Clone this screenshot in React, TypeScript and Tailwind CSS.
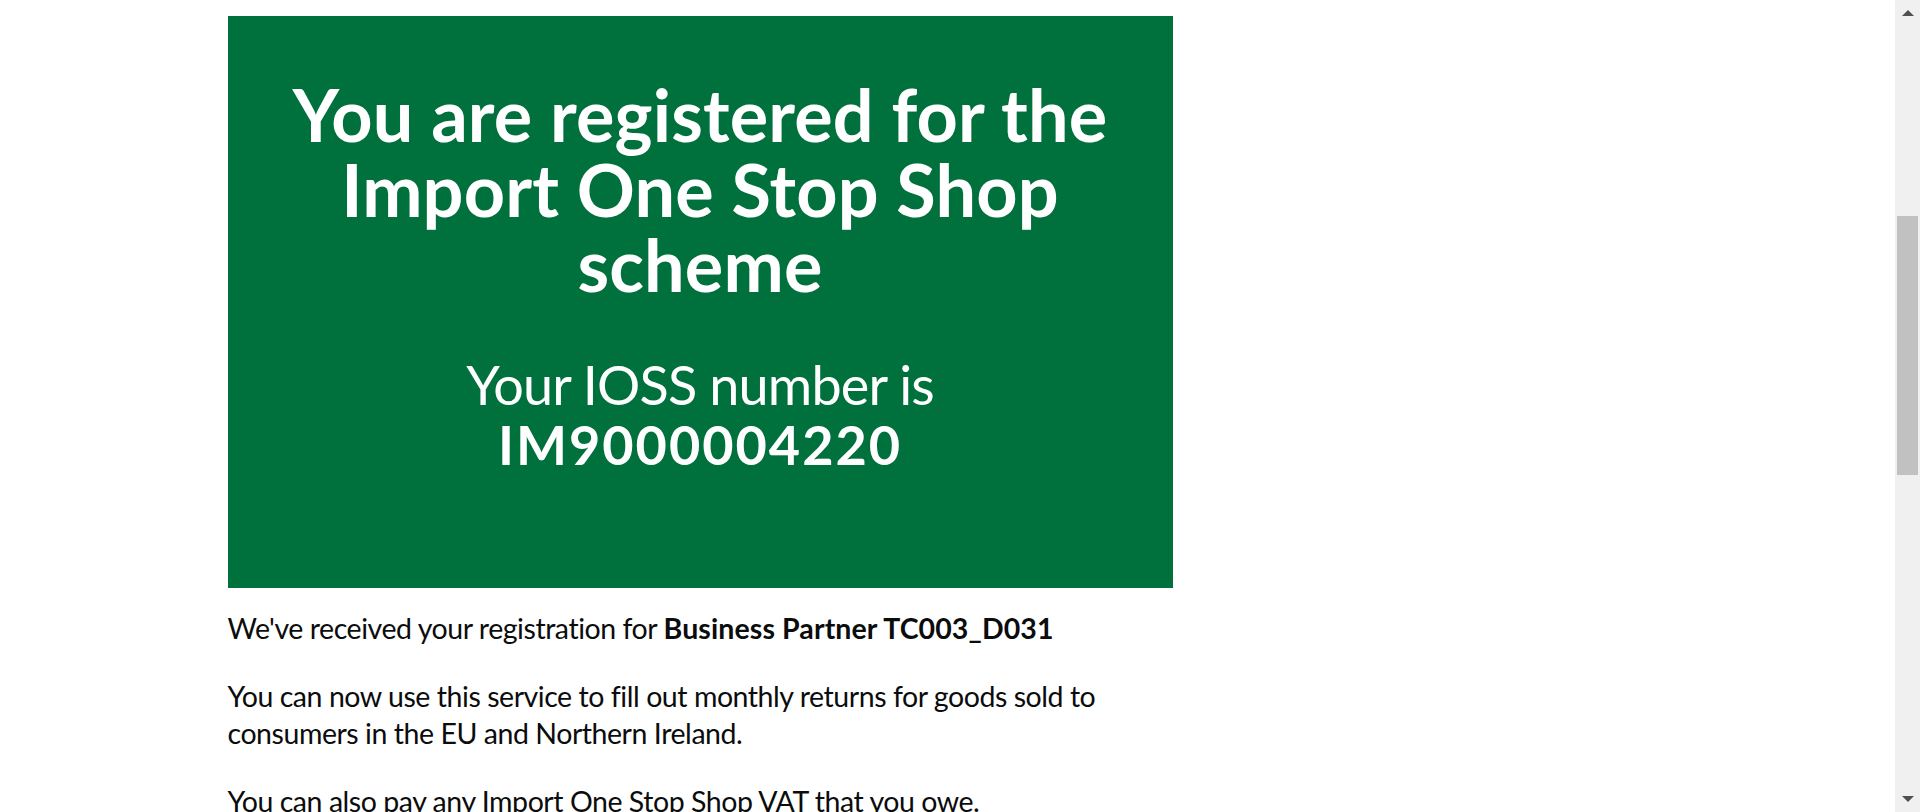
import React from "react";

const Scrollbar = () => {
  return (
    <aside className="w-[25px] shrink-0 bg-[#f0f0f0] flex flex-col items-center pt-[10px] pb-[10px]">
      <div className="w-0 h-0 border-x-[6px] border-x-transparent border-b-[6px] border-b-[#505050]" />
      <div className="mt-[200px] w-[21px] h-[259px] bg-[#c1c1c1]" />
      <div className="flex-1" />
      <div className="w-0 h-0 border-x-[6px] border-x-transparent border-t-[6px] border-t-[#505050]" />
    </aside>
  );
};

const App = () => {
  return (
    <div className="flex h-[812px] overflow-hidden bg-white font-['Lato',sans-serif] text-[#0b0c0c]">
      <main className="flex-1 min-w-0">
        <div className="mx-auto w-[1440px] pt-4">
          <div className="w-[945px]">
            <div className="bg-[#00703c] text-white text-center px-[60px] pt-[61px] pb-[113px]">
              <h1 className="text-[72px] leading-[75px] font-bold tracking-[0.15px] mb-[53px]">
                You are registered for the Import One Stop Shop scheme
              </h1>
              <div className="text-[54px] leading-[60px]">
                <span className="tracking-[-0.85px]">Your IOSS number is</span>
                <br />
                <strong className="font-bold tracking-[2px]">IM9000004220</strong>
              </div>
            </div>
            <div className="mt-[22px] text-[28.5px] leading-[37.5px] tracking-[-0.45px]">
              <p className="mb-[30px]">
                We've received your registration for{" "}
                <strong className="font-bold tracking-[0.1px]">Business Partner TC003_D031</strong>
              </p>
              <p className="mb-[30px]">
                You can now use this service to fill out monthly returns for goods sold to
                consumers in the EU and Northern Ireland.
              </p>
              <p className="mb-[30px]">You can also pay any Import One Stop Shop VAT that you owe.</p>
            </div>
          </div>
        </div>
      </main>
      <Scrollbar />
    </div>
  );
};

export default App;
